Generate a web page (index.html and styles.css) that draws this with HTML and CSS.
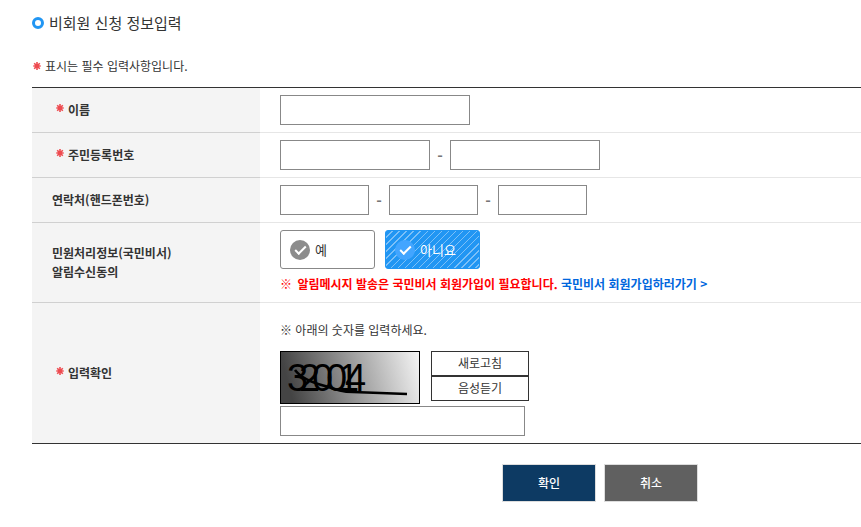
FILE: index.html
```html
<!DOCTYPE html>
<html lang="ko">
<head>
  <meta charset="UTF-8">
  <meta name="viewport" content="width=device-width, initial-scale=1">
  <title>비회원 신청 정보입력</title>
  <link rel="stylesheet" href="styles.css">
</head>
<body>
  <svg class="sprite" aria-hidden="true">
    <symbol id="required" viewBox="0 0 8 8">
      <path d="M4 0v8M0.3 4h7.4M1.2 1.2l5.6 5.6M6.8 1.2l-5.6 5.6" stroke="#ee4b50" stroke-width="1.6"/>
    </symbol>
  </svg>

  <form class="apply-form">
    <h1 class="title">비회원 신청 정보입력</h1>
    <p class="notice"><svg class="required"><use href="#required"/></svg>표시는 필수 입력사항입니다.</p>

    <table class="form-table">
      <tbody>
        <tr>
          <th scope="row"><label class="must" for="name"><svg class="required"><use href="#required"/></svg>이름</label></th>
          <td><input type="text" id="name" class="text name"></td>
        </tr>
        <tr>
          <th scope="row"><label class="must" for="jumin1"><svg class="required"><use href="#required"/></svg>주민등록번호</label></th>
          <td>
            <div class="fields">
              <input type="text" id="jumin1" class="text jumin">
              <span class="dash">-</span>
              <input type="password" id="jumin2" class="text jumin" aria-label="주민등록번호 뒷자리">
            </div>
          </td>
        </tr>
        <tr>
          <th scope="row"><label for="phone1">연락처(핸드폰번호)</label></th>
          <td>
            <div class="fields">
              <input type="text" id="phone1" class="text phone">
              <span class="dash">-</span>
              <input type="text" id="phone2" class="text phone" aria-label="연락처 가운데자리">
              <span class="dash">-</span>
              <input type="text" id="phone3" class="text phone" aria-label="연락처 끝자리">
            </div>
          </td>
        </tr>
        <tr>
          <th scope="row">민원처리정보(국민비서)<br>알림수신동의</th>
          <td>
            <div class="choices">
              <label class="choice" for="agreeY"><input type="radio" name="agree" id="agreeY" value="Y">예</label>
              <label class="choice" for="agreeN"><input type="radio" name="agree" id="agreeN" value="N" checked>아니요</label>
            </div>
            <p class="alert"><span>※</span> 알림메시지 발송은 국민비서 회원가입이 필요합니다. <a href="#">국민비서 회원가입하러가기 &gt;</a></p>
          </td>
        </tr>
        <tr>
          <th scope="row"><label class="must" for="captcha"><svg class="required"><use href="#required"/></svg>입력확인</label></th>
          <td>
            <p class="guide">※ 아래의 숫자를 입력하세요.</p>
            <div class="captcha">
              <svg class="captcha-image" viewBox="0 0 138 51" role="img" aria-label="자동입력방지 숫자">
                <defs>
                  <linearGradient id="shade" x1="0" y1="0.1" x2="1" y2="0">
                    <stop offset="0" stop-color="#444"/>
                    <stop offset="1" stop-color="#f5f5f5"/>
                  </linearGradient>
                </defs>
                <rect width="138" height="51" fill="url(#shade)"/>
                <text class="digits" x="6 18 31 45 57 64" y="39">320014</text>
                <path d="M14 18C20 26 32 31 44 34C56 38 62 40 72 40L126 42" fill="none" stroke="#000" stroke-width="2.6"/>
              </svg>
              <div class="captcha-buttons">
                <button type="button">새로고침</button>
                <button type="button">음성듣기</button>
              </div>
            </div>
            <input type="text" id="captcha" class="text answer">
          </td>
        </tr>
      </tbody>
    </table>

    <div class="actions">
      <button type="submit" class="btn confirm">확인</button>
      <button type="button" class="btn cancel">취소</button>
    </div>
  </form>
</body>
</html>
```
FILE: styles.css
```css
*,
*::before {
  box-sizing: border-box;
  margin: 0;
  padding: 0;
}

body {
  font-family: "Noto Sans CJK KR", sans-serif;
  font-size: 12px;
  line-height: 19px;
  color: #333;
  background: #fff;
}

input,
button {
  font: inherit;
}

.sprite {
  display: none;
}

.apply-form {
  padding: 12px 0 24px 32px;
}

.title {
  display: flex;
  align-items: center;
  gap: 5px;
  font-size: 15px;
  font-weight: 400;
  line-height: 22px;
}

.title::before {
  content: "";
  width: 12px;
  height: 12px;
  border: 3px solid #2196f3;
  border-radius: 50%;
}

.notice {
  display: flex;
  align-items: center;
  gap: 4px;
  margin: 22px 0 12px;
  padding-left: 1px;
}

.required {
  width: 8px;
  height: 8px;
  flex: none;
}

/* form table */
.form-table {
  width: 100%;
  border-collapse: collapse;
  border-top: 1px solid #333;
  border-bottom: 1px solid #333;
}

.form-table th {
  width: 228px;
  padding: 6px 20px 8px;
  border-bottom: 1px solid #d0d0d0;
  background: #f4f4f4;
  text-align: left;
  font-weight: 700;
}

.form-table td {
  padding: 7px 20px;
  border-bottom: 1px solid #e6e6e6;
}

.form-table tr:last-child > * {
  border-bottom: 0;
}

.must {
  display: flex;
  align-items: center;
  gap: 4px;
  padding-left: 4px;
}

.must .required {
  margin-bottom: 3px;
}

.fields {
  display: flex;
  align-items: center;
}

.dash {
  width: 20px;
  text-align: center;
  font-size: 15px;
  font-weight: 700;
  color: #777;
}

.text {
  display: block;
  height: 30px;
  padding: 0 8px;
  border: 1px solid #888;
  background: #fff;
}

.name {
  width: 190px;
}

.jumin {
  width: 150px;
}

.phone {
  width: 89px;
}

.answer {
  width: 245px;
}

/* yes / no */
.choices {
  display: flex;
  gap: 10px;
}

.choice {
  display: flex;
  align-items: center;
  gap: 5px;
  width: 95px;
  height: 39px;
  padding-left: 9px;
  border: 1px solid #888;
  border-radius: 3px;
  font-size: 13px;
}

.choice input {
  display: flex;
  justify-content: center;
  width: 20px;
  height: 20px;
  border-radius: 50%;
  background: #8c8c8c;
  appearance: none;
}

.choice input::before {
  content: "";
  width: 11px;
  height: 6px;
  margin-top: 6px;
  border: solid #fff;
  border-width: 0 0 2px 2px;
  transform: rotate(-45deg);
}

.choice:has(:checked) {
  border-color: #2196f3;
  background: repeating-linear-gradient(135deg, #2196f3 0 4px, #7cc0f8 4px 5px);
  color: #fff;
}

.choice input:checked {
  background: #42a5ff;
}

.alert {
  padding: 5px 0 2px;
  color: #f00;
  font-weight: 700;
}

.alert span {
  margin-right: 2px;
}

.alert a {
  color: #0066dd;
  text-decoration: none;
}

/* captcha */
.guide {
  padding: 10px 0 12px;
}

.captcha {
  display: flex;
  gap: 11px;
  margin-bottom: 2px;
}

.captcha-image {
  width: 140px;
  height: 53px;
  border: 1px solid #000;
}

.digits {
  font-family: "Liberation Sans", sans-serif;
  font-size: 38px;
}

.captcha-buttons button {
  display: block;
  width: 98px;
  height: 25px;
  padding-bottom: 2px;
  border: 1px solid #333;
  background: #fff;
  color: #333;
}

/* bottom buttons */
.actions {
  display: flex;
  justify-content: flex-end;
  gap: 8px;
  padding: 20px 163px 0 0;
}

.btn {
  width: 94px;
  height: 38px;
  padding-bottom: 2px;
  border: 1px solid #ddd;
  color: #fff;
  font-weight: 500;
}

.confirm {
  background: #0d3a63;
}

.cancel {
  background: #606060;
}
```
